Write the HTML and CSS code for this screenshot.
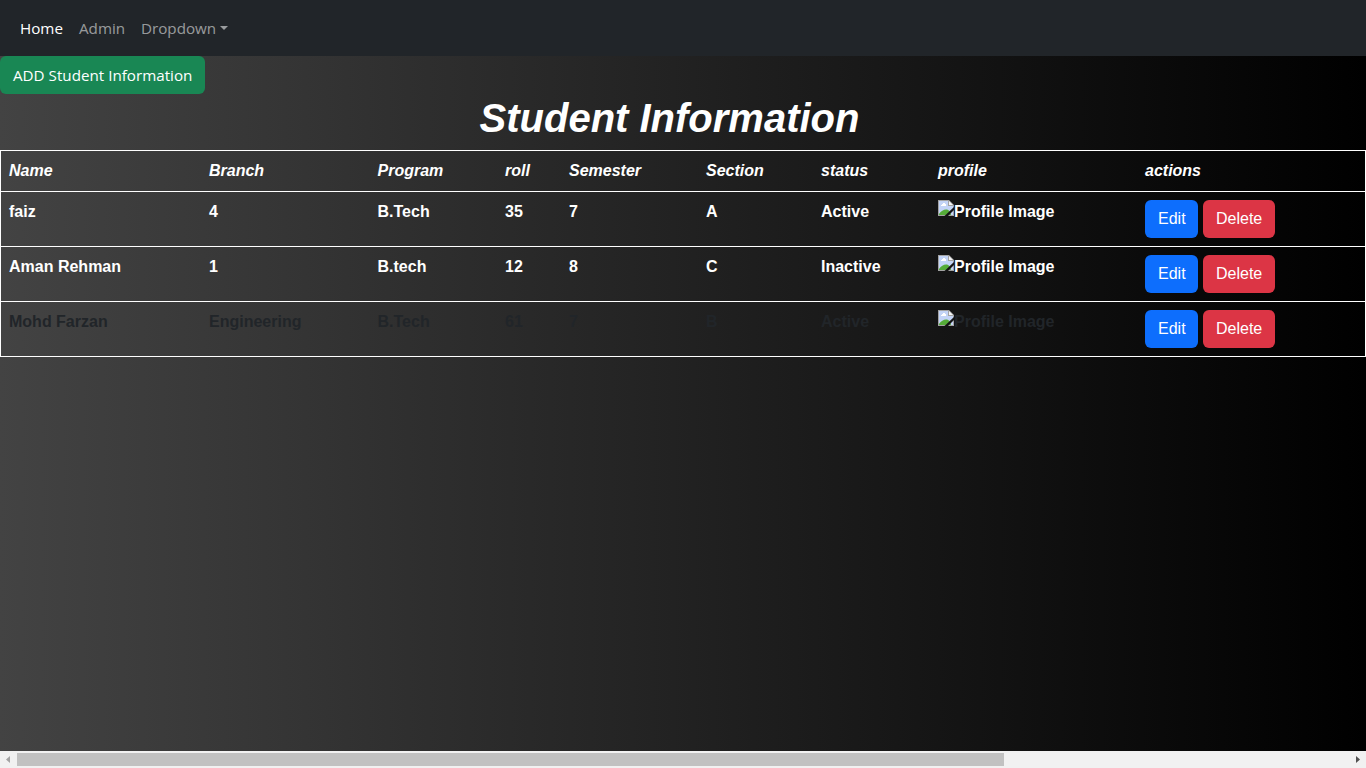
FILE: index.html
```html
<!DOCTYPE html>
<html lang="en">
<head>
<meta charset="utf-8">
<title>Student Information</title>
<link rel="stylesheet" href="styles.css">
</head>
<body>
<svg class="defs" width="0" height="0" aria-hidden="true">
  <symbol id="broken" viewBox="0 0 16 16">
    <path d="M0 0H11L16 5V16H0Z" fill="#a3a3a3"/>
    <path d="M1 1H10V6H15V15H1Z" fill="#c3d4f6"/>
    <path d="M3 6V5H4V4H5V3H7V4H8V6Z" fill="#fff"/>
    <path d="M11 1L15 5H11Z" fill="#f4f4f4"/>
    <path d="M1 15V14C3 11 5.500 9.500 8 9.500S12 11 13 15Z" fill="#55ac39"/>
    <path d="M16 7V10L10 16H6.500Z" fill="#141414"/>
  </symbol>
</svg>
<nav class="navbar">
  <a class="nav-link active">Home</a>
  <a class="nav-link admin">Admin</a>
  <a class="nav-link dropdown">Dropdown<span class="caret"></span></a>
</nav>
<main class="page">
  <a class="btn btn-add"><span>ADD Student Information</span></a>
  <h1 class="title">Student Information</h1>
  <table class="table">
    <colgroup><col class="c-name"><col class="c-branch"><col class="c-program"><col class="c-roll"><col class="c-semester"><col class="c-section"><col class="c-status"><col class="c-profile"><col></colgroup>
    <thead>
      <tr><th>Name</th><th>Branch</th><th>Program</th><th>roll</th><th>Semester</th><th>Section</th><th>status</th><th>profile</th><th>actions</th></tr>
    </thead>
    <tbody>
      <tr><td>faiz</td><td>4</td><td>B.Tech</td><td>35</td><td>7</td><td>A</td><td>Active</td>
        <td><div class="profile"><svg class="icon"><use href="#broken"/></svg>Profile Image</div></td>
        <td><div class="actions"><a class="btn btn-edit">Edit</a><a class="btn btn-delete">Delete</a></div></td></tr>
      <tr><td>Aman Rehman</td><td>1</td><td>B.tech</td><td>12</td><td>8</td><td>C</td><td>Inactive</td>
        <td><div class="profile"><svg class="icon"><use href="#broken"/></svg>Profile Image</div></td>
        <td><div class="actions"><a class="btn btn-edit">Edit</a><a class="btn btn-delete">Delete</a></div></td></tr>
      <tr class="dim"><td>Mohd Farzan</td><td>Engineering</td><td>B.Tech</td><td>61</td><td>7</td><td>B</td><td>Active</td>
        <td><div class="profile"><svg class="icon"><use href="#broken"/></svg>Profile Image</div></td>
        <td><div class="actions"><a class="btn btn-edit">Edit</a><a class="btn btn-delete">Delete</a></div></td></tr>
    </tbody>
  </table>
</main>
<div class="scrollbar">
  <svg class="arrow" viewBox="0 0 17 17"><path d="M10 5V12L6 8.500Z" fill="#a3a3a3"/></svg>
  <div class="track"><div class="thumb"></div></div>
  <svg class="arrow" viewBox="0 0 17 17"><path d="M7 5V12L11 8.500Z" fill="#505050"/></svg>
</div>
</body>
</html>
```
FILE: styles.css
```css
* { box-sizing: border-box; }
body {
  margin: 0;
  height: 768px;
  display: flex;
  flex-direction: column;
  overflow: hidden;
  background: linear-gradient(to right, #434343, #000);
  font: 16px/24px "Liberation Sans", Arial, sans-serif;
  color: #fff;
}
.defs { display: none; }
.navbar {
  flex: none;
  height: 56px;
  padding: 0 12px;
  display: flex;
  align-items: center;
  background: #212529;
  font-family: "Open Sans", "Noto Sans", sans-serif;
}
.nav-link {
  padding: 8px;
  color: rgba(255, 255, 255, .55);
  white-space: nowrap;
  font-size: 15.200px;
}
.nav-link.active { color: #fff; width: 59px; }
.nav-link.admin { width: 62px; }
.nav-link.dropdown { display: flex; align-items: center; width: 103px; }
.caret {
  margin-left: auto;
  border-top: 4.800px solid;
  border-left: 4.800px solid transparent;
  border-right: 4.800px solid transparent;
}
.page { flex: 1; min-height: 0; }
.btn {
  display: block;
  height: 38px;
  padding: 7px 13px;
  border-radius: 6px;
  font-weight: 400;
  color: #fff;
  white-space: nowrap;
}
.btn-add {
  width: 205px;
  background: #198754;
  font-family: "Open Sans", "Noto Sans", sans-serif;
  font-size: 15.200px;
}
.btn-edit { width: 53px; background: #0d6efd; }
.btn-delete { width: 72px; background: #dc3545; }
.title {
  margin: 0 27px 8px 0;
  font-size: 40px;
  line-height: 48px;
  font-style: italic;
  font-weight: 700;
  text-align: center;
}
.table {
  width: 100%;
  table-layout: fixed;
  border-collapse: separate;
  border-spacing: 0;
  border: 1px solid #fff;
  border-bottom: 0;
  font-weight: 700;
}
.table th, .table td {
  padding: 8px;
  border-bottom: 1px solid #fff;
  text-align: left;
  vertical-align: top;
  white-space: nowrap;
}
.table th { font-style: italic; }
.table td { height: 55px; }
.c-name { width: 200px; }
.c-branch { width: 168.500px; }
.c-program { width: 127.500px; }
.c-roll { width: 64px; }
.c-semester { width: 137px; }
.c-section { width: 115px; }
.c-status { width: 117px; }
.c-profile { width: 207px; }
.dim { color: #212529; }
.profile { display: flex; align-items: flex-start; }
.icon { width: 16px; height: 16px; flex: none; }
.actions { display: flex; gap: 5px; }
.scrollbar { flex: none; height: 17px; display: flex; background: #f1f1f1; }
.arrow { width: 17px; height: 17px; flex: none; }
.track { flex: 1; padding: 2px 0; }
.thumb { width: 987px; height: 13px; background: #c1c1c1; }
```
